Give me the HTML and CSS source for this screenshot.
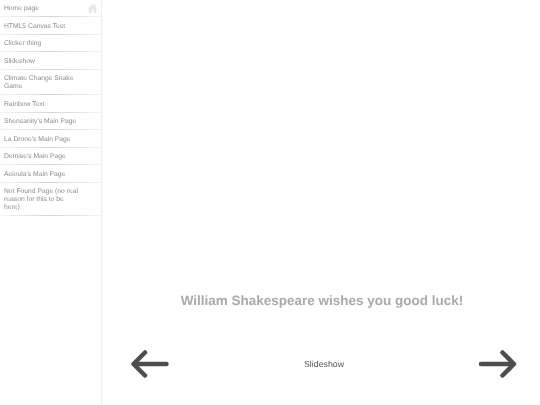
FILE: index.html
```html
<!DOCTYPE html>
<html lang="en">
<head>
<meta charset="utf-8">
<title>Slideshow</title>
<link rel="stylesheet" href="styles.css">
</head>
<body>
<nav class="sidebar">
  <a class="item home">Home page
    <svg class="home-icon" viewBox="0 0 12 12"><path d="M6 1 L1 6 L2 6.500 L2 11 L5 11 L5 7.500 L7 7.500 L7 11 L10 11 L10 6.500 L11 6 L9.500 4.500 L9.500 1.500 L8 1.500 L8 3 Z"/></svg>
  </a>
  <a class="item">HTML5 Canvas Test</a>
  <a class="item">Clicker thing</a>
  <a class="item">Slideshow</a>
  <a class="item">Climate Change Snake Game</a>
  <a class="item">Rainbow Text</a>
  <a class="item">Shensanity's Main Page</a>
  <a class="item">La Drone's Main Page</a>
  <a class="item">Demise's Main Page</a>
  <a class="item">Aeioula's Main Page</a>
  <a class="item">Not Found Page (no real reason for this to be here)</a>
</nav>
<main class="content">
  <h1 class="headline">William Shakespeare wishes you good luck!</h1>
  <div class="controls">
    <svg class="arrow" viewBox="0 0 40 32"><path d="M36.500 16 H4 M15 4.500 L3.500 16 L15 27.500"/></svg>
    <span class="label">Slideshow</span>
    <svg class="arrow" viewBox="0 0 40 32"><path d="M3 16 H35.500 M24.500 4.500 L36 16 L24.500 27.500"/></svg>
  </div>
</main>
</body>
</html>
```
FILE: styles.css
```css
html, body { margin: 0; height: 100%; }
body {
  display: flex;
  width: 540px;
  height: 405px;
  overflow: hidden;
  background: #fff;
  font-family: "Liberation Sans", Arial, sans-serif;
  text-rendering: geometricPrecision;
}
.sidebar {
  width: 101px;
  flex: none;
  border-right: 1px solid #f0f0f0;
  filter: blur(0.25px);
  background: #fff;
}
.item {
  display: block;
  position: relative;
  padding: 5.400px 20px 4.300px 4px;
  font-size: 6.750px;
  line-height: 7.800px;
  color: #8c8c8c;
  background: linear-gradient(to right, #f4f4f4, #d4d4d4 50%, #f4f4f4) bottom / 100% 1px no-repeat;
}
.home-icon {
  position: absolute;
  right: 3px;
  top: 3px;
  width: 11px;
  height: 11px;
  fill: #e6e6e6;
}
.content {
  flex: 1;
  display: flex;
  flex-direction: column;
  justify-content: flex-end;
  align-items: center;
  padding-left: 2px;
  filter: blur(0.25px);
}
.headline {
  margin: 0 0 39.500px;
  font-size: 13.500px;
  line-height: 17px;
  font-weight: bold;
  color: #aaa;
}
.controls {
  width: 100%;
  box-sizing: border-box;
  display: flex;
  justify-content: space-between;
  align-items: center;
  padding: 0 22px 25px 26px;
}
.arrow {
  width: 40px;
  height: 32px;
  fill: none;
  stroke: #4d4d4d;
  stroke-width: 4.500px;
  stroke-linecap: round;
  stroke-linejoin: round;
}
.label {
  font-size: 8.775px;
  color: #555;
}
```
